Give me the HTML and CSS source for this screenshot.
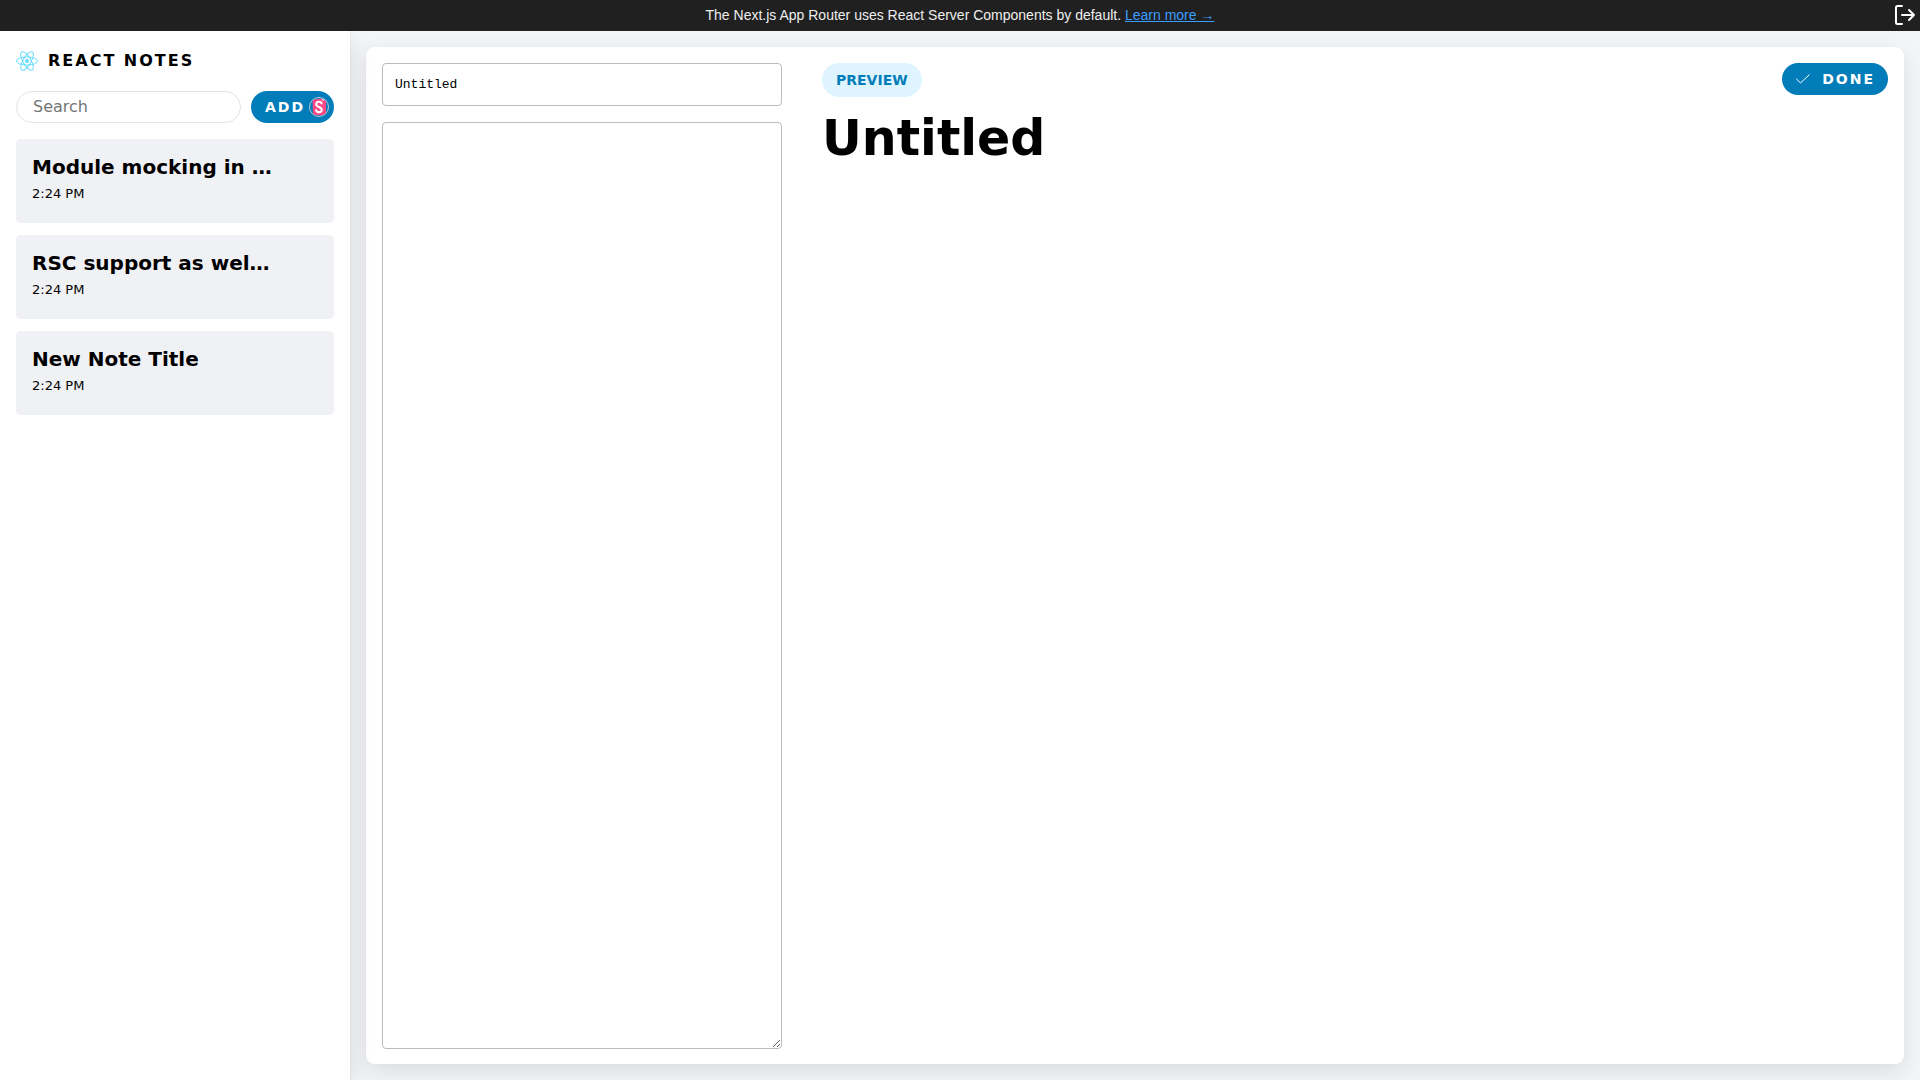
FILE: index.html
```html
<!DOCTYPE html>
<html lang="en">
<head>
<meta charset="utf-8">
<title>React Notes</title>
<link rel="stylesheet" href="styles.css">
</head>
<body>
<div class="banner">
  <p class="banner-text">The Next.js App Router uses React Server Components by default. <a class="banner-link" href="#">Learn more →</a></p>
  <button class="logout" type="button" aria-label="Log out">
    <svg width="24" height="24" viewBox="0 0 24 24" fill="none" stroke="currentColor" stroke-width="2" stroke-linecap="round" stroke-linejoin="round"><path d="M9 3H4.500Q3 3 3 4.500V19.500Q3 21 4.500 21H9M9 12h12M16 7l5 5-5 5"/></svg>
  </button>
</div>
<div class="container">
  <aside class="sidebar">
    <header class="sidebar-header">
      <svg class="logo" width="22" height="20" viewBox="-11.500 -10.232 23 20.463" fill="none" stroke="#61dafb"><circle r="2.050" fill="#61dafb" stroke="none"/><ellipse rx="11" ry="4.200"/><ellipse rx="11" ry="4.200" transform="rotate(60)"/><ellipse rx="11" ry="4.200" transform="rotate(120)"/></svg>
      <strong>REACT NOTES</strong>
    </header>
    <div class="menu">
      <input class="search" type="text" placeholder="Search" aria-label="Search">
      <button class="button add" type="button">ADD
        <svg class="avatar" width="20" height="20" viewBox="0 0 20 20" aria-hidden="true"><clipPath id="round"><circle cx="10" cy="10" r="9"/></clipPath><g clip-path="url(#round)"><path d="M3.500 2.500L16 1.500Q17 1.500 17 2.500V17.500Q17 18.600 16 18.600L5 18Q4 18 4 17Z" fill="#ff4785"/><path d="M13.300 1.500h1.800l.1 2.300-.9-.6-1 .5z" fill="#fff"/><path d="M12.700 7.200C12.700 3.800 7.200 4.200 7.200 7.200C7.200 10.400 12.800 9.600 12.800 12.700C12.800 16.200 7 15.800 7 12.500" fill="none" stroke="#fff" stroke-width="2.100"/></g><circle cx="10" cy="10" r="9.500" fill="none" stroke="#bfc6d4"/></svg>
      </button>
    </div>
    <nav class="notes">
      <button class="note" type="button"><strong class="note-title">Module mocking in …</strong><small class="note-time">2:24 PM</small></button>
      <button class="note" type="button"><strong class="note-title">RSC support as wel…</strong><small class="note-time">2:24 PM</small></button>
      <button class="note" type="button"><strong class="note-title">New Note Title</strong><small class="note-time">2:24 PM</small></button>
    </nav>
  </aside>
  <main class="viewer">
    <div class="editor">
      <form class="editor-form">
        <input class="field" type="text" value="Untitled" aria-label="Note title">
        <textarea class="field body-field" aria-label="Note body"></textarea>
      </form>
      <section class="preview">
        <div class="preview-top">
          <div class="label">PREVIEW</div>
          <button class="button done" type="button"><svg width="14" height="10" viewBox="0 0 14 10" fill="none" stroke="#fff" aria-hidden="true"><path d="M0 4.500L4.500 9L13.500 .5"/></svg>DONE</button>
        </div>
        <h1 class="title">Untitled</h1>
      </section>
    </div>
  </main>
</div>
</body>
</html>
```
FILE: styles.css
```css
* { box-sizing: border-box; }
body {
  margin: 0;
  min-height: 100vh;
  display: flex;
  flex-direction: column;
  background: #f4f5f9;
  color: #000;
  font-family: "DejaVu Sans", sans-serif;
  font-size: 16px;
}
button, input, textarea { font: inherit; margin: 0; }
button { border: 0; cursor: pointer; }

.banner {
  display: grid;
  grid-template-columns: 1fr auto 1fr;
  align-items: center;
  min-height: 31px;
  background: #202020;
  color: #eee;
  position: relative;
  z-index: 2;
}
.banner-text {
  grid-column: 2;
  margin: 0;
  font: 14px/21px "Liberation Sans", Arial, sans-serif;
}
.banner-link { color: #3b9eff; }
.logout {
  justify-self: end;
  display: flex;
  padding: 0 3px 1px 0;
  background: none;
  color: #fff;
}

.container { flex: 1; display: flex; }
.sidebar {
  flex: 0 0 350px;
  min-width: 0;
  background: #fff;
  box-shadow: 0 8px 24px rgba(0, 0, 0, .1), 0 2px 2px rgba(0, 0, 0, .1);
  position: relative;
  z-index: 1;
}
.sidebar-header {
  display: flex;
  align-items: center;
  gap: 10px;
  padding: 16px 16px 0;
  line-height: 27px;
  letter-spacing: 2px;
}
.menu {
  display: flex;
  justify-content: space-between;
  gap: 10px;
  padding: 17px 16px 16px;
}
.search {
  flex: 1;
  min-width: 0;
  height: 32px;
  padding: 0 16px 2px;
  border: 1px solid #e4e4e8;
  border-radius: 16px;
  background: #fff;
}
.search::placeholder { color: #757575; }
.button {
  display: flex;
  align-items: center;
  height: 32px;
  border-radius: 16px;
  background: #037dba;
  color: #fff;
  font-size: 14px;
  font-weight: 700;
  letter-spacing: 2px;
}
.add { gap: 4px; padding: 0 5px 0 14px; }
.notes {
  display: flex;
  flex-direction: column;
  gap: 12px;
  padding: 0 16px;
}
.note {
  display: flex;
  flex-direction: column;
  padding: 16px 16px 14px;
  border-radius: 5px;
  background: #f0f1f5;
  color: #000;
  text-align: left;
}
.note-title { font-size: 20px; line-height: 24px; }
.note-time { font-size: 13px; line-height: 30px; }

.viewer { flex: 1; display: flex; padding: 16px; min-width: 0; }
.editor {
  flex: 1;
  display: flex;
  gap: 40px;
  padding: 16px 16px 15px;
  border-radius: 8px;
  background: #fff;
  box-shadow: 0 8px 24px rgba(0, 0, 0, .1), 0 0 1px rgba(0, 0, 0, .1);
}
.editor-form {
  flex: 0 0 400px;
  display: flex;
  flex-direction: column;
  gap: 16px;
}
.field {
  height: 43px;
  padding: 12px;
  border: 1px solid #bbbcbf;
  border-radius: 4px;
  background: #fff;
  font: 13px/16px "Liberation Mono", monospace;
}
.body-field { flex: 1; }
.preview { flex: 1; min-width: 0; }
.preview-top {
  display: flex;
  justify-content: space-between;
  align-items: flex-start;
}
.label {
  padding: 0 14px;
  border-radius: 17px;
  background: #def5ff;
  color: #037dba;
  font-size: 14px;
  font-weight: 700;
  line-height: 34px;
}
.done { gap: 12px; padding: 0 13px 0 14px; }
.title { margin: 14px 0 0; font-size: 49px; line-height: 56px; }
```
